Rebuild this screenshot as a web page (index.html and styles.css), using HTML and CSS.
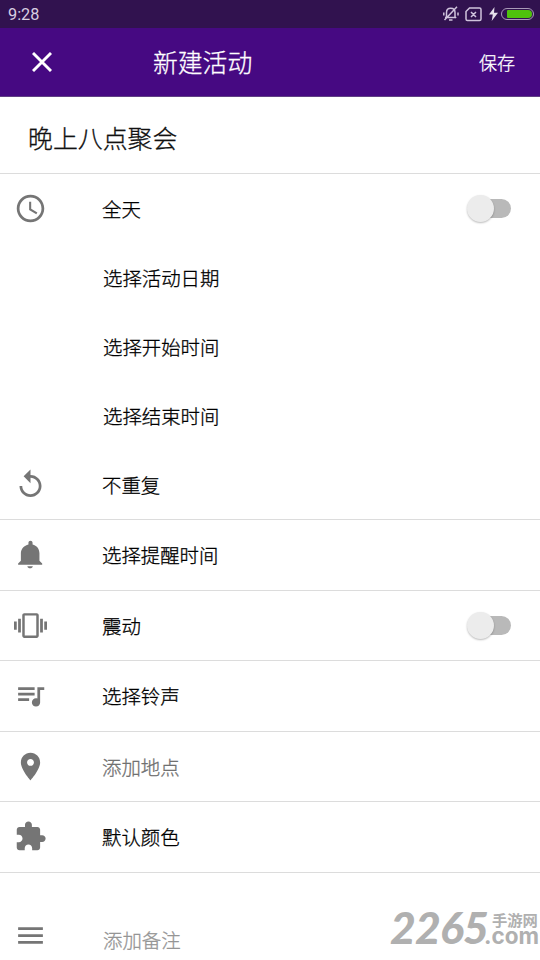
FILE: index.html
```html
<!DOCTYPE html>
<html lang="zh-CN">
<head>
<meta charset="utf-8">
<title>新建活动</title>
<link rel="stylesheet" href="styles.css">
</head>
<body>
<div class="status">
  <span class="time">9:28</span>
  <svg class="mute" width="18" height="16" viewBox="0 0 18 16" fill="none" stroke="#cfc3dc" stroke-width="1.5"><path d="M3 11.6h11M4.500 11V6.500C4.500 3.800 6.200 2.300 8.700 2.300S13 3.800 13 6.500V11l1.200 1M15 .8 2.500 14M7 14h3.500M1.800 6.500v3M16 6.500v3"/></svg>
  <svg class="sim" width="17" height="15" viewBox="0 0 17 15" fill="none" stroke="#cfc3dc" stroke-width="1.500"><path d="M4.500 1H14.500q1.500 0 1.500 1.500v9.500q0 1.500-1.500 1.500H2.500Q1 13.500 1 12V4.500zM6 5l5 5M11 5l-5 5"/></svg>
  <svg class="bolt" width="9" height="14" viewBox="0 0 9 14" fill="#e5deeb"><path d="M5.500 0 0 7.500h3.800L2.700 14 9 5.800H5z"/></svg>
  <span class="battery"><span class="charge"></span></span>
</div>
<header class="toolbar">
  <svg class="close" width="20" height="20" viewBox="0 0 20 20" stroke="#fff" stroke-width="2.900"><path d="m1 1 18 18M19 1 1 19"/></svg>
  <h1>新建活动</h1>
  <span class="save">保存</span>
</header>
<main>
  <div class="title">晚上八点聚会</div>
  <section class="schedule">
    <div class="row">
      <svg class="icon" viewBox="0 0 24 24"><path d="M12 2C6.500 2 2 6.500 2 12s4.500 10 10 10 10-4.500 10-10S17.500 2 12 2zm0 18A8 8 0 1 1 12 4a8 8 0 0 1 0 16zM12.500 7H11v6l5.200 3.200.8-1.300-4.500-2.700z"/></svg>
      <span class="label">全天</span><span class="switch"></span>
    </div>
    <div class="row"><span class="label sub">选择活动日期</span></div>
    <div class="row"><span class="label sub">选择开始时间</span></div>
    <div class="row"><span class="label sub">选择结束时间</span></div>
    <div class="row">
      <svg class="icon" viewBox="0 0 24 24"><path d="M12 5V1L7 6l5 5V7c3.310 0 6 2.690 6 6s-2.690 6-6 6-6-2.690-6-6H4c0 4.420 3.580 8 8 8s8-3.580 8-8-3.580-8-8-8z"/></svg>
      <span class="label">不重复</span>
    </div>
  </section>
  <div class="row item">
    <svg class="icon" viewBox="0 0 24 24"><path d="M9.700 20.500h4c-.2 1-1 1.500-2 1.500s-1.800-.5-2-1.500zM18.500 16.500V11c0-3.070-2-5.640-5-6.320V3.500c0-.83-.67-1.500-1.500-1.500s-1.500.67-1.500 1.500v1.180C7.500 5.360 5 7.930 5 11v5.500l-2 2v1h17.500v-1z"/></svg>
    <span class="label">选择提醒时间</span>
  </div>
  <div class="row item">
    <svg class="icon" viewBox="0 0 24 24"><path d="M0 15h2V9H0v6zm3 2h2V7H3v10zm19-8v6h2V9h-2zm-3 8h2V7h-2v10zM16.500 3h-9C6.670 3 6 3.670 6 4.500v15c0 .83.670 1.500 1.500 1.500h9c.83 0 1.500-.67 1.500-1.500v-15c0-.83-.67-1.500-1.500-1.500zM16.200 19.200H7.800V4.800h8.400z"/></svg>
    <span class="label">震动</span><span class="switch"></span>
  </div>
  <div class="row item">
    <svg class="icon" viewBox="0 0 24 24"><path d="M15 6H3v2h12V6zm0 4H3v2h12v-2zM3 16h8v-2H3v2zM17 6v8.180c-.31-.11-.65-.18-1-.18-1.660 0-3 1.340-3 3s1.340 3 3 3 3-1.340 3-3V8h3V6h-5z"/></svg>
    <span class="label">选择铃声</span>
  </div>
  <div class="row item">
    <svg class="icon" viewBox="0 0 24 24"><path d="M12 2C8.130 2 5 5.130 5 9c0 5.250 7 13 7 13s7-7.750 7-13c0-3.870-3.130-7-7-7zm0 9.500c-1.380 0-2.500-1.120-2.500-2.500s1.120-2.500 2.500-2.500 2.500 1.120 2.500 2.500-1.120 2.500-2.500 2.500z"/></svg>
    <span class="label hint">添加地点</span>
  </div>
  <div class="row item">
    <svg class="icon" viewBox="0 0 24 24"><path d="M20.500 11H19V7c0-1.100-.9-2-2-2h-4V3.500C13 2.120 11.880 1 10.500 1S8 2.120 8 3.500V5H4c-1.100 0-1.990.9-1.990 2v3.800H3.500c1.490 0 2.700 1.210 2.700 2.700s-1.210 2.700-2.700 2.700H2V20c0 1.100.9 2 2 2h3.800v-1.500c0-1.490 1.210-2.700 2.700-2.700 1.490 0 2.700 1.210 2.700 2.700V22H17c1.100 0 2-.9 2-2v-4h1.500c1.380 0 2.500-1.120 2.500-2.500S21.880 11 20.500 11z"/></svg>
    <span class="label">默认颜色</span>
  </div>
  <div class="row note">
    <svg class="icon" viewBox="0 0 24 24"><path d="M3 18h18v-2H3v2zm0-5h18v-2H3v2zm0-7v2h18V6H3z"/></svg>
    <span class="label sub">添加备注</span>
  </div>
</main>
<div class="watermark">
  <span class="number">2265</span>
  <span class="site"><span class="cn">手游网</span><span class="com">.com</span></span>
</div>
</body>
</html>
```
FILE: styles.css
```css
* { box-sizing: border-box; }
body {
  margin: 0;
  width: 540px;
  height: 960px;
  overflow: hidden;
  position: relative;
  background: #fff;
  color: #111;
  font-family: "Noto Sans CJK SC", sans-serif;
  font-weight: 300;
}
.status {
  height: 28px;
  display: flex;
  align-items: center;
  padding: 0 6px 0 8px;
  background: #31124f;
}
.time {
  flex: 1;
  padding-top: 2px;
  font: 16.300px/28px Roboto, sans-serif;
  color: #d8cee1;
}
.mute { margin-right: 5px; }
.sim { margin-right: 7px; }
.bolt { margin-right: 3px; }
.battery {
  width: 33px;
  height: 12px;
  padding: 1px 1px 1px 5px;
  border: 1px solid #a99ab8;
  border-radius: 6px;
}
.charge {
  display: block;
  height: 8px;
  background: #4fc30c;
  border-radius: 1px 4px 4px 1px;
}
.toolbar {
  height: 69px;
  display: flex;
  align-items: center;
  padding: 0 25px 0 32px;
  background: #460982;
  border-bottom: 1px solid #604084;
  color: #fff;
}
.toolbar h1 {
  flex: 1;
  margin: -2px 0 0 101px;
  font-size: 24.800px;
  line-height: 36px;
  font-weight: 300;
}
.save { font-size: 18px; }
.toolbar, .title, .label { -webkit-text-stroke: .3px; }
.title {
  height: 77px;
  padding: 5px 28px 0;
  border-bottom: 1px solid #dcdcdc;
  font-size: 24.900px;
  line-height: 70px;
}
.schedule {
  height: 346px;
  border-bottom: 1px solid #dcdcdc;
}
.row {
  height: 69px;
  display: flex;
  align-items: center;
  padding: 0 29px 0 14px;
}
.item {
  height: 70.500px;
  border-bottom: 1px solid #dcdcdc;
}
.icon {
  width: 33px;
  height: 33px;
  fill: #757575;
}
.label {
  margin-left: 55px;
  font-size: 19.400px;
  line-height: 30px;
  color: #000;
}
.item .label { padding-top: 1px; }
.label.sub { margin-left: 56px; }
.row > .label:first-child { margin-left: 89px; }
.label.hint { color: #707070; }
.note {
  height: 86px;
  padding-top: 39px;
}
.note .label {
  color: #959595;
  padding-top: 9px;
}
.switch {
  width: 36px;
  height: 19px;
  margin-left: auto;
  border-radius: 10px;
  background: #b9b9b9;
}
.switch::before {
  content: "";
  display: block;
  width: 27px;
  height: 27px;
  margin: -4px 0 0 -8px;
  border-radius: 50%;
  background: #ececec;
  box-shadow: 0 1px 2px #0004;
}
.watermark {
  position: absolute;
  left: 390px;
  top: 905px;
  display: flex;
  color: #b0b0b0;
  font-family: Lato, "Noto Sans CJK SC", sans-serif;
  font-weight: 900;
  line-height: 1;
}
.number {
  width: 94px;
  font-size: 44.500px;
  font-style: italic;
  letter-spacing: -.8px;
}
.site {
  display: flex;
  flex-direction: column;
}
.cn {
  margin: 7px 0 0 8px;
  font-size: 15.300px;
  font-weight: 700;
  line-height: 16px;
  white-space: nowrap;
}
.com {
  font-family: Inter, sans-serif;
  font-weight: 700;
  font-size: 22.500px;
  line-height: 15px;
}
```
